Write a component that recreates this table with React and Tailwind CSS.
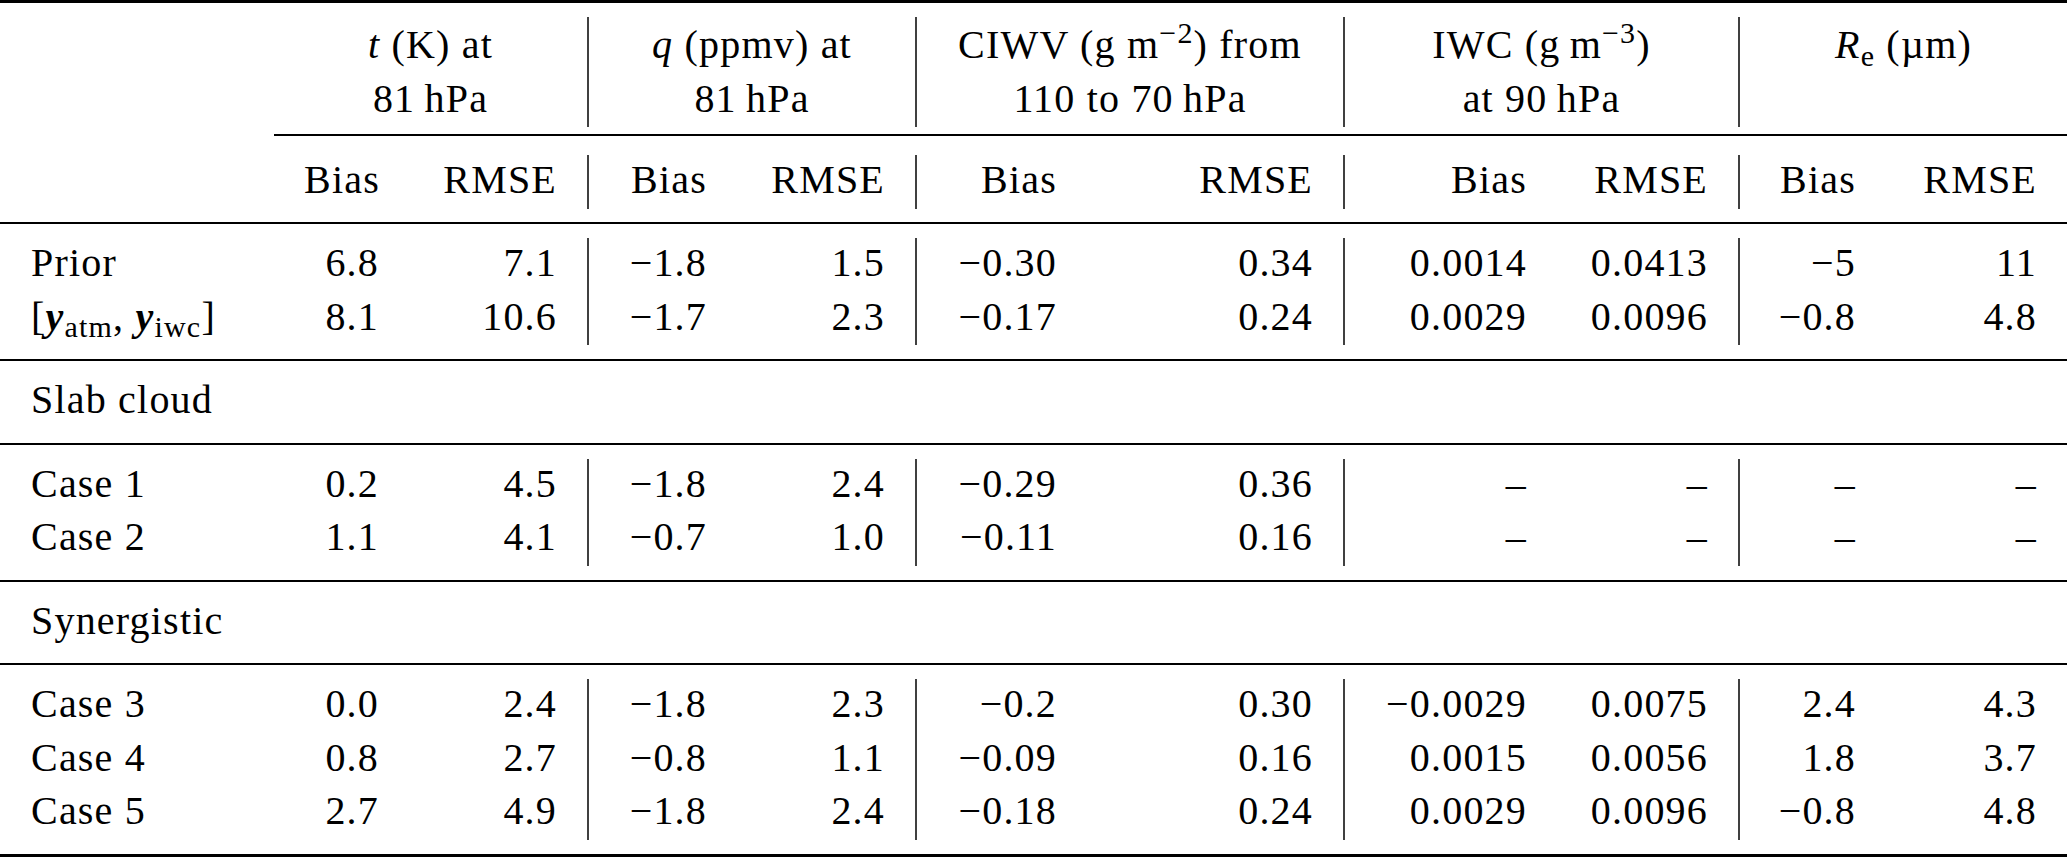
import React from "react";

const cell = "leading-[49.5px] pb-[4px]";
const sep = `${cell} px-[30px] text-right border-r-2 border-[#404040]`;
const plain = `${cell} px-[30px] text-right`;

const blocks = {
  base: [
    ["Prior", ["6.8", "7.1", "−1.8", "1.5", "−0.30", "0.34", "0.0014", "0.0413", "−5", "11"]],
    ["yy", ["8.1", "10.6", "−1.7", "2.3", "−0.17", "0.24", "0.0029", "0.0096", "−0.8", "4.8"]],
  ],
  slab: [
    ["Case 1", ["0.2", "4.5", "−1.8", "2.4", "−0.29", "0.36", "–", "–", "–", "–"]],
    ["Case 2", ["1.1", "4.1", "−0.7", "1.0", "−0.11", "0.16", "–", "–", "–", "–"]],
  ],
  syn: [
    ["Case 3", ["0.0", "2.4", "−1.8", "2.3", "−0.2", "0.30", "−0.0029", "0.0075", "2.4", "4.3"]],
    ["Case 4", ["0.8", "2.7", "−0.8", "1.1", "−0.09", "0.16", "0.0015", "0.0056", "1.8", "3.7"]],
    ["Case 5", ["2.7", "4.9", "−1.8", "2.4", "−0.18", "0.24", "0.0029", "0.0096", "−0.8", "4.8"]],
  ],
};

// [y_atm, y_iwc] label
const Obs = () => (
  <>
    [<b className="italic font-bold">y</b>
    <sub>atm</sub>, <b className="italic font-bold">y</b>
    <sub>iwc</sub>]
  </>
);

const Rule = ({ className }) => (
  <tr>
    <td colSpan={11} className="p-0">
      <div className={className}></div>
    </td>
  </tr>
);

const DataRow = ({ label, values }) => (
  <tr>
    <td className={`${cell} pl-[31px] text-left whitespace-nowrap`}>
      {label === "yy" ? <Obs /> : label}
    </td>
    {values.map((v, i) => (
      <td key={i} className={i % 2 === 1 && i < 9 ? sep : plain}>
        {v}
      </td>
    ))}
  </tr>
);

const Section = ({ title }) => (
  <tr>
    <td colSpan={11} className={`${cell} pl-[31px] text-left`}>
      {title}
    </td>
  </tr>
);

export default function App() {
  return (
    <div className="w-[2067px] min-h-[857px] bg-white">
      <table className="w-[2067px] table-fixed border-separate border-spacing-0 text-[40px] leading-[53.5px] tracking-[0.03em] text-black font-[family-name:Liberation_Serif,Times_New_Roman,serif]">
        <colgroup>
          <col className="w-[274px]" />
          <col className="w-[135px]" />
          <col className="w-[180px]" />
          <col className="w-[148px]" />
          <col className="w-[180px]" />
          <col className="w-[170px]" />
          <col className="w-[258px]" />
          <col className="w-[212px]" />
          <col className="w-[183px]" />
          <col className="w-[146px]" />
          <col className="w-[181px]" />
        </colgroup>
        <thead>
          <Rule className="h-[3px] bg-black mb-[14px]" />
          <tr>
            <th className="p-0"></th>
            <th colSpan={2} className="pt-[1px] pb-[2px] align-top font-normal text-center border-r-2 border-[#404040]">
              <div>
                <i>t</i> (K) at
              </div>
              <div>81&thinsp;hPa</div>
            </th>
            <th colSpan={2} className="pt-[1px] pb-[2px] align-top font-normal text-center border-r-2 border-[#404040]">
              <div>
                <i>q</i> (ppmv) at
              </div>
              <div>81&thinsp;hPa</div>
            </th>
            <th colSpan={2} className="pt-[1px] pb-[2px] align-top font-normal text-center border-r-2 border-[#404040] whitespace-nowrap">
              <div>
                CIWV (g m<sup>−2</sup>) from
              </div>
              <div>110 to 70&thinsp;hPa</div>
            </th>
            <th colSpan={2} className="pt-[1px] pb-[2px] align-top font-normal text-center border-r-2 border-[#404040]">
              <div>
                IWC (g&thinsp;m<sup>−3</sup>)
              </div>
              <div>at 90&thinsp;hPa</div>
            </th>
            <th colSpan={2} className="pt-[1px] pb-[2px] align-top font-normal text-center">
              <div>
                <i>R</i>
                <sub>e</sub> (µm)
              </div>
            </th>
          </tr>
          <tr>
            <td className="p-0"></td>
            <td colSpan={10} className="p-0">
              <div className="mt-[7px] mb-[19.5px] h-[1.5px] bg-black"></div>
            </td>
          </tr>
          <tr>
            <th className="p-0"></th>
            {["Bias", "RMSE", "Bias", "RMSE", "Bias", "RMSE", "Bias", "RMSE", "Bias", "RMSE"].map((h, i) => (
              <th key={i} className={`font-normal ${i % 2 === 1 && i < 9 ? sep : plain}`}>
                {h}
              </th>
            ))}
          </tr>
          <Rule className="mt-[13.5px] mb-[14px] h-[2px] bg-black" />
        </thead>
        <tbody>
          {blocks.base.map(([l, v]) => (
            <DataRow key={l} label={l} values={v} />
          ))}
          <Rule className="my-[14px] h-[2px] bg-black" />
          <Section title="Slab cloud" />
          <Rule className="my-[14px] h-[2px] bg-black" />
          {blocks.slab.map(([l, v]) => (
            <DataRow key={l} label={l} values={v} />
          ))}
          <Rule className="my-[14px] h-[2px] bg-black" />
          <Section title="Synergistic" />
          <Rule className="my-[14px] h-[2px] bg-black" />
          {blocks.syn.map(([l, v]) => (
            <DataRow key={l} label={l} values={v} />
          ))}
          <Rule className="mt-[14px] h-[3px] bg-black" />
        </tbody>
      </table>
    </div>
  );
}
